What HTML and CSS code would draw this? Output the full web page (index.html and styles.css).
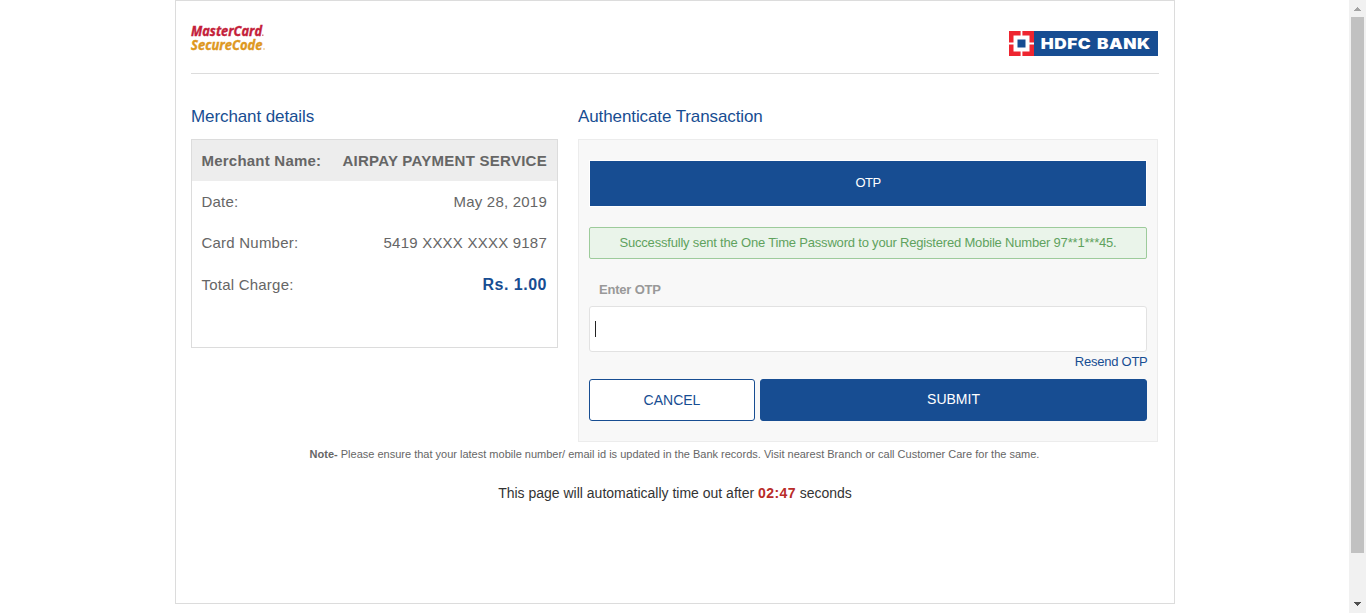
FILE: index.html
```html
<!DOCTYPE html>
<html lang="en">
<head>
<meta charset="utf-8">
<title>Authenticate Transaction</title>
<link rel="stylesheet" href="styles.css">
</head>
<body>
<div class="window">
  <div class="viewport">
    <main class="page">
      <header class="header">
        <svg class="securecode" width="90" height="50" viewBox="0 -8 90 50" role="img" aria-label="MasterCard SecureCode">
          <text class="sc-red" x="0" y="14" textLength="71" lengthAdjust="spacingAndGlyphs">MasterCard</text>
          <text class="sc-gold" x="0" y="28" textLength="71.5" lengthAdjust="spacingAndGlyphs">SecureCode</text>
          <rect x="71" y="12.5" width="1.5" height="1.5" fill="#d9818c"/>
          <rect x="72" y="26.5" width="2" height="1" fill="#e8c078"/>
        </svg>
        <svg class="hdfc" width="149" height="25" viewBox="0 0 149 25" role="img" aria-label="HDFC Bank">
          <rect width="149" height="25" fill="#174d92"/>
          <rect width="25" height="25" fill="#ee2530"/>
          <path d="M11.6 0h1.8v25h-1.8zM0 11.6h25v1.8H0z" fill="#fff"/>
          <path d="M4.5 4.5h16v16h-16z" fill="#fff"/>
          <rect x="8.5" y="8.5" width="8" height="8" fill="#174d92"/>
          <text class="hdfc-text" x="31.8" y="18" textLength="109.8" lengthAdjust="spacingAndGlyphs">HDFC BANK</text>
        </svg>
      </header>
      <div class="columns">
        <section class="merchant">
          <h2 class="title">Merchant details</h2>
          <dl class="details">
            <div class="row row-head"><dt>Merchant Name:</dt><dd>AIRPAY PAYMENT SERVICE</dd></div>
            <div class="row"><dt>Date:</dt><dd>May 28, 2019</dd></div>
            <div class="row"><dt>Card Number:</dt><dd>5419 XXXX XXXX 9187</dd></div>
            <div class="row row-total"><dt>Total Charge:</dt><dd class="amount">Rs. 1.00</dd></div>
          </dl>
        </section>
        <section class="auth">
          <h2 class="title">Authenticate Transaction</h2>
          <div class="panel">
            <div class="tab">OTP</div>
            <p class="success"><span>Successfully sent the One Time Password to your Registered Mobile Number 97**1***45.</span></p>
            <p class="label">Enter OTP</p>
            <div class="field"><span class="caret"></span></div>
            <a class="resend">Resend OTP</a>
            <div class="actions">
              <div class="btn cancel">CANCEL</div>
              <div class="btn submit">SUBMIT</div>
            </div>
          </div>
        </section>
      </div>
      <p class="note"><b>Note-</b> Please ensure that your latest mobile number/ email id is updated in the Bank records. Visit nearest Branch or call Customer Care for the same.</p>
      <p class="timeout">This page will automatically time out after <b>02:47</b> seconds</p>
    </main>
  </div>
  <div class="scrollbar">
    <svg class="arrow" width="17" height="17" shape-rendering="crispEdges"><path d="M8 7h1v1h1v1h1v1h1v1H5v-1h1V9h1V8h1z" fill="#a3a3a3"/></svg>
    <div class="thumb"></div>
    <svg class="arrow" width="17" height="17" shape-rendering="crispEdges"><path d="M5 6h7v1h-1v1h-1v1H9v1H8V9H7V8H6V7H5z" fill="#505050"/></svg>
  </div>
</div>
</body>
</html>
```
FILE: styles.css
```css
* { box-sizing: border-box; }
body {
  margin: 0;
  background: #fff;
  font-family: "Liberation Sans", Arial, sans-serif;
  color: #666;
}
h2, p, dl, dd { margin: 0; }
.window { display: flex; height: 613px; overflow: hidden; }
.viewport { flex: 1; display: flex; justify-content: center; align-items: flex-start; padding-left: 1px; }
.page { width: 1000px; height: 604px; border: 1px solid #dcdcdc; padding: 0 15px; }

.header {
  display: flex;
  justify-content: space-between;
  align-items: flex-start;
  height: 73px;
  width: 968px;
  padding: 13px 1px 0 0;
  border-bottom: 1px solid #dcdcdc;
}
.hdfc { margin-top: 17px; }
.securecode { overflow: visible; }
.sc-red, .sc-gold {
  font-family: "Open Sans", sans-serif;
  font-size: 14px;
  font-weight: 700;
  font-style: italic;
  stroke-width: 0.4px;
}
.sc-red { fill: #c41e3a; stroke: #c41e3a; }
.sc-gold { fill: #de981f; stroke: #de981f; }
.hdfc-text {
  font-family: Inter, "Liberation Sans", sans-serif;
  font-weight: 900;
  font-size: 15px;
  letter-spacing: 0.4px;
  word-spacing: 1.8px;
  fill: #fff;
}

.columns { display: flex; gap: 20px; padding-top: 32px; }
.merchant { width: 367px; }
.auth { width: 580px; }
.title { height: 33px; font-size: 17px; line-height: 21px; font-weight: 400; letter-spacing: -0.1px; color: #174d92; }

.details { height: 209px; border: 1px solid #dcdcdc; font-size: 15px; letter-spacing: 0.22px; }
.row { display: flex; justify-content: space-between; height: 41px; line-height: 42px; padding: 0 10px 0 9.5px; }
.row-head { background: #ededed; font-weight: 700; }
.row-head dd { letter-spacing: 0.27px; }
.row-total { height: 43px; line-height: 43px; }
.amount { font-size: 16px; font-weight: 700; letter-spacing: 0.5px; color: #174d92; }

.panel { height: 303px; padding: 20px 10px 0; background: #f8f8f8; border: 1px solid #ececec; }
.tab {
  height: 47px;
  border: 1px solid #fff;
  background: #174d92;
  color: #fff;
  font-size: 13px;
  letter-spacing: -0.5px;
  line-height: 44px;
  text-align: center;
}
.success {
  height: 32px;
  margin-top: 20px;
  border: 1px solid #9dcb9b;
  border-radius: 2px;
  background: #eaf4ea;
  color: #5fa25e;
  font-size: 13px;
  letter-spacing: -0.19px;
  line-height: 30px;
  text-align: center;
}
.label { margin-top: 21px; padding-left: 10px; height: 26px; font-size: 13px; line-height: 20px; font-weight: 700; letter-spacing: -0.2px; color: #999; }
.field { display: flex; align-items: center; height: 46px; padding-left: 5px; border: 1px solid #e2e2e2; border-radius: 3px; background: #fff; }
.caret { width: 1px; height: 16px; background: #222; }
.resend { display: block; height: 27px; margin-right: -0.5px; line-height: 19px; font-size: 13px; letter-spacing: -0.25px; text-align: right; color: #174d92; }
.actions { display: flex; gap: 5px; }
.btn { height: 42px; border: 1px solid #174d92; border-radius: 3px; font-size: 14px; line-height: 41px; text-align: center; }
.cancel { width: 166px; background: #fff; color: #174d92; }
.submit { width: 387px; background: #174d92; color: #fff; line-height: 39px; }

.note { padding: 5px 1px 0 0; font-size: 11px; line-height: 15px; text-align: center; }
.timeout { padding-top: 21px; font-size: 14px; line-height: 20px; text-align: center; color: #333; }
.timeout b { color: #b92c28; letter-spacing: 0.4px; }

.scrollbar { width: 17px; display: flex; flex-direction: column; align-items: center; background: #f1f1f1; }
.thumb { width: 13px; height: 536px; background: #c1c1c1; }
.arrow { display: block; flex: none; }
.arrow:last-child { margin-top: auto; }
```
